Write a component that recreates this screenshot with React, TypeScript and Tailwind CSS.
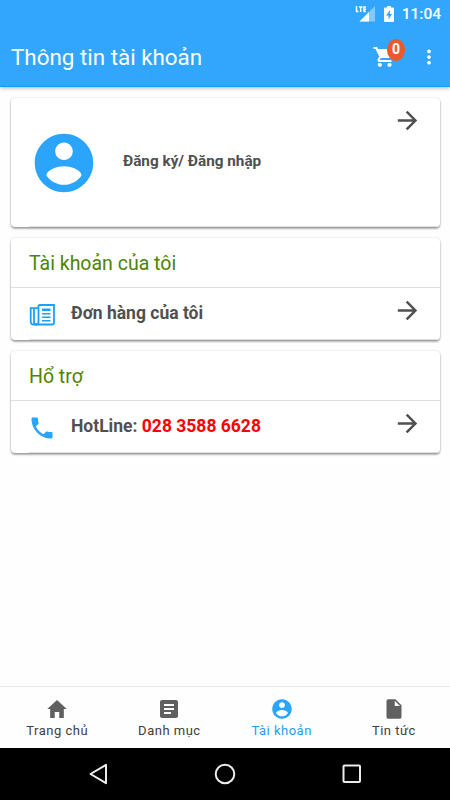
import type { ReactNode } from "react";
import type { IconType } from "react-icons";
import {
  IoMdArrowForward,
  IoMdCall,
  IoMdContact,
  IoMdDocument,
  IoMdHome,
  IoMdMore,
} from "react-icons/io";
import { MdArticle } from "react-icons/md";

const TABS: { label: string; icon: IconType; active?: boolean }[] = [
  { label: "Trang chủ", icon: IoMdHome },
  { label: "Danh mục", icon: MdArticle },
  { label: "Tài khoản", icon: IoMdContact, active: true },
  { label: "Tin tức", icon: IoMdDocument },
];

function StatusBar() {
  return (
    <div className="flex h-7 items-center justify-end pr-[9px]">
      <svg className="mr-[9px] h-4 w-5" viewBox="0 0 20 16" fill="#fff">
        <path d="M20 0v15.500H4.500z" opacity=".4" />
        <path d="M14 6v9.500H4.500z" />
        <path d="M1.500 0v5.500h2M4 .9h3.500M5.700 .7v5.300M11 .9H9v4.600h2M9 3.200h2" fill="none" stroke="#fff" strokeWidth="1.500" />
      </svg>
      <svg className="mr-2 h-4 w-2.5" viewBox="0 0 10 16" fill="#fff">
        <path fillRule="evenodd" d="M3 0h4v1.500h2q1 0 1 1V15q0 1-1 1H1q-1 0-1-1V2.500q0-1 1-1h2zM6 4L2 9.500h2.500V13.500L8 8H5.700z" />
      </svg>
      <span className="text-[15.5px] leading-7 font-medium">11:04</span>
    </div>
  );
}

function CartIcon() {
  return (
    <svg className="h-6 w-6" viewBox="0 0 24 24" fill="currentColor">
      <path d="M1.500 2v2h2l3.700 7.600-1.500 2.600c-.8 1.400.2 2.700 1.600 2.700h12.200v-1.800H8.200c-.3 0-.5-.3-.3-.6l.8-1.400h8.200c.7 0 1.300-.4 1.600-.9L22.300 5.500c.4-.7-.1-1.500-.9-1.500H6L5.100 2z" />
      <circle cx="7.800" cy="19.800" r="2.100" />
      <circle cx="17.500" cy="19.800" r="2.100" />
    </svg>
  );
}

function NewspaperIcon() {
  return (
    <svg className="h-[22px] w-[26px]" viewBox="0 0 26 22" fill="none" stroke="#1ba0fd" strokeWidth="1.800">
      <path d="M9.500 1h15.500v17.500q0 2-2 2H5q-3.300 0-3.300-3V4.200h7.800" />
      <path d="M9.500 1v16.500q0 3-2.300 3-2.200 0-2.200-3V4.200" />
      <path d="M13 5.800h8.500" strokeWidth="2.400" />
      <path d="M13 9.800h8.500M13 13.200h8.500M13 16.700h8.500" strokeWidth="1.500" />
    </svg>
  );
}

function Card({ title, children }: { title?: string; children: ReactNode }) {
  return (
    <section className="overflow-hidden rounded-[4px] bg-white shadow-[0_2px_2px_0_rgba(0,0,0,0.24),0_1px_3px_-1px_rgba(0,0,0,0.4),0_0_2px_0_rgba(0,0,0,0.14)]">
      {title && (
        <h2 className="h-[50px] border-b border-[#dedede] pl-[18px] text-[19.5px] leading-[51px] text-[#4d8400]">
          {title}
        </h2>
      )}
      {children}
    </section>
  );
}

function Row({ icon, children }: { icon: ReactNode; children: ReactNode }) {
  return (
    <div className="ml-[18px] flex h-[52px] border-b border-[#dedede] text-[#505050]">
      <div className="w-[42px] pt-4">{icon}</div>
      <div className="flex-1 text-[17.5px] leading-[51px] font-bold">{children}</div>
      <IoMdArrowForward className="mt-2 mr-[18px] size-[29px]" />
    </div>
  );
}

export default function App() {
  return (
    <div className="flex h-[800px] w-[450px] flex-col bg-[#fefefe] font-[Roboto,sans-serif]">
      <header className="h-[87px] border-b border-[#149cf5] bg-[#31a6fc] text-white shadow-[0_1px_4px_rgba(0,0,0,0.3)]">
        <StatusBar />
        <div className="flex h-[58px] items-center pl-[11px]">
          <h1 className="flex-1 pt-px text-[22.4px]">Thông tin tài khoản</h1>
          <div className="relative mr-[21px]">
            <CartIcon />
            <span className="absolute -top-[6px] left-[15px] h-[22px] w-[18px] rounded-[50%] bg-[#ed5a29] text-center text-sm leading-[20px] font-bold">
              0
            </span>
          </div>
          <IoMdMore className="mr-[9px] size-6" />
        </div>
      </header>

      <main className="flex flex-1 flex-col gap-[11px] pt-[11px] pr-[10px] pl-[11px]">
        <Card>
          <div className="ml-[18px] flex h-[129px] border-b border-[#dedede] text-[#505050]">
            <IoMdContact className="mt-[29px] -ml-px size-[72px] text-[#2ba4fc]" />
            <div className="ml-[23px] flex-1 text-[15.3px] leading-[126px] font-bold">
              Đăng ký/ Đăng nhập
            </div>
            <IoMdArrowForward className="mt-2 mr-[18px] size-[29px]" />
          </div>
        </Card>
        <Card title="Tài khoản của tôi">
          <Row icon={<NewspaperIcon />}>Đơn hàng của tôi</Row>
        </Card>
        <Card title="Hổ trợ">
          <Row icon={<IoMdCall className="-mt-[3px] -ml-px size-7 text-[#2ba4fc]" />}>
            HotLine: <span className="text-[#fe0000]">028 3588 6628</span>
          </Row>
        </Card>
      </main>

      <nav className="flex h-[62px] border-t border-[#e8e8e8] pl-px">
        {TABS.map((t) => (
          <div
            key={t.label}
            className={`flex flex-1 flex-col items-center pt-[10px] ${t.active ? "text-[#1ba0fd]" : "text-[#404040]"}`}
          >
            <t.icon className={`size-6 ${t.active ? "text-[#2ba4fc]" : "text-[#606060]"}`} />
            <span className="text-[13px] leading-5 tracking-[0.5px]">{t.label}</span>
          </div>
        ))}
      </nav>

      <div className="flex h-[52px] justify-center bg-black">
        <svg className="h-[52px] w-[450px]" viewBox="0 0 450 52" fill="none" stroke="#ececec" strokeWidth="2" strokeLinejoin="round">
          <path d="M106 16.800v18.400L90.500 26z" />
          <circle cx="225" cy="26" r="9.300" />
          <rect x="343.500" y="17.500" width="16.500" height="16.500" rx="1" />
        </svg>
      </div>
    </div>
  );
}
